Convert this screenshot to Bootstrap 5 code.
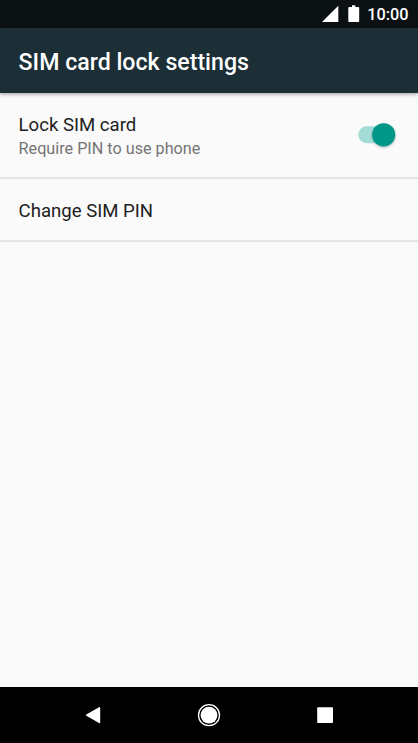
<!DOCTYPE html>
<html lang="en">
<head>
<meta charset="utf-8">
<meta name="viewport" content="width=device-width, initial-scale=1">
<title>SIM card lock settings</title>
<link href="https://cdn.jsdelivr.net/npm/bootstrap@5.3.0/dist/css/bootstrap.min.css" rel="stylesheet">
<style>
body { font-family: Roboto, sans-serif; background: #fafafa; color: #212121; }
svg { display: block; }
.status-bar { height: 28px; background: #0b1013; color: #fff; padding-right: 9.5px; }
.clock { font-size: 16.26px; font-weight: 500; line-height: 28px; margin-left: 7.6px; padding-top: 2px; }
.app-bar { height: 65px; background: #1c2e36; color: #fff; padding: 4px 18.6px 0; box-shadow: 0 1px 4px rgba(0,0,0,.4); z-index: 1; }
.app-title { font-size: 23.15px; font-weight: 500; line-height: 28px; }
.list-group-flush > .list-group-item.pref { background: transparent; color: inherit; border: 0; border-bottom: 2px solid #e5e5e5; padding: 2px 18.6px 0; }
.list-group-flush > .list-group-item.pref-lock { height: 86px; padding-right: 20px; }
.list-group-flush > .list-group-item.pref-change { height: 63px; }
.pref-title { font-size: 18.58px; line-height: 24px; }
.pref-note { font-size: 16.2px; line-height: 23px; color: #757575; }
.nav-keys { height: 56px; background: #000; }
</style>
<script src="https://cdn.jsdelivr.net/npm/bootstrap@5.3.0/dist/js/bootstrap.bundle.min.js"></script>
</head>
<body class="d-flex flex-column vh-100 overflow-hidden">
<div class="status-bar d-flex align-items-center justify-content-end flex-shrink-0">
  <svg width="38" height="28" viewBox="0 0 38 28" fill="#fff" aria-hidden="true">
    <path d="M0 22 16.300 5.700V22Z"/>
    <path d="M27.200 7H30V5.300h3.300V7H36.300q.9 0 .9.900V21.100q0 .9-.9.900H27.200q-.9 0-.9-.9V7.900q0-.9.900-.9Z"/>
  </svg>
  <span class="clock">10:00</span>
</div>
<header class="app-bar d-flex align-items-center flex-shrink-0 position-relative">
  <h1 class="app-title m-0">SIM card lock settings</h1>
</header>
<main class="flex-grow-1">
  <div class="list-group list-group-flush rounded-0">
    <div class="list-group-item pref pref-lock d-flex align-items-center justify-content-between">
      <div>
        <div class="pref-title">Lock SIM card</div>
        <div class="pref-note">Require PIN to use phone</div>
      </div>
      <svg width="42" height="30" viewBox="0 0 42 30" role="switch" aria-checked="true" aria-label="Lock SIM card">
        <defs><filter id="sh" x="-30%" y="-30%" width="160%" height="170%"><feDropShadow dx="0" dy="1" stdDeviation="1" flood-color="#000" flood-opacity=".3"/></filter></defs>
        <rect x="2.300" y="5.300" width="34" height="17" rx="8.500" fill="#a3dcd6"/>
        <circle cx="27.700" cy="13.800" r="11.600" fill="#009688" filter="url(#sh)"/>
      </svg>
    </div>
    <div class="list-group-item pref pref-change d-flex align-items-center">
      <div class="pref-title">Change SIM PIN</div>
    </div>
  </div>
</main>
<footer class="nav-keys d-flex align-items-center justify-content-center flex-shrink-0">
  <svg width="418" height="56" viewBox="0 0 418 56" fill="#fff" aria-hidden="true">
    <path d="M86.300 27.400 99 20.200Q100.200 19.700 100.200 20.900V35.300Q100.200 36.500 99 36L86.300 28.800Q85.200 28.100 86.300 27.400Z"/>
    <circle cx="209" cy="28.200" r="8.400"/>
    <circle cx="209" cy="28.200" r="10.500" fill="none" stroke="#fff" stroke-width="1.300"/>
    <rect x="317.200" y="20.200" width="15.800" height="15.800" rx="1"/>
  </svg>
</footer>
</body>
</html>
